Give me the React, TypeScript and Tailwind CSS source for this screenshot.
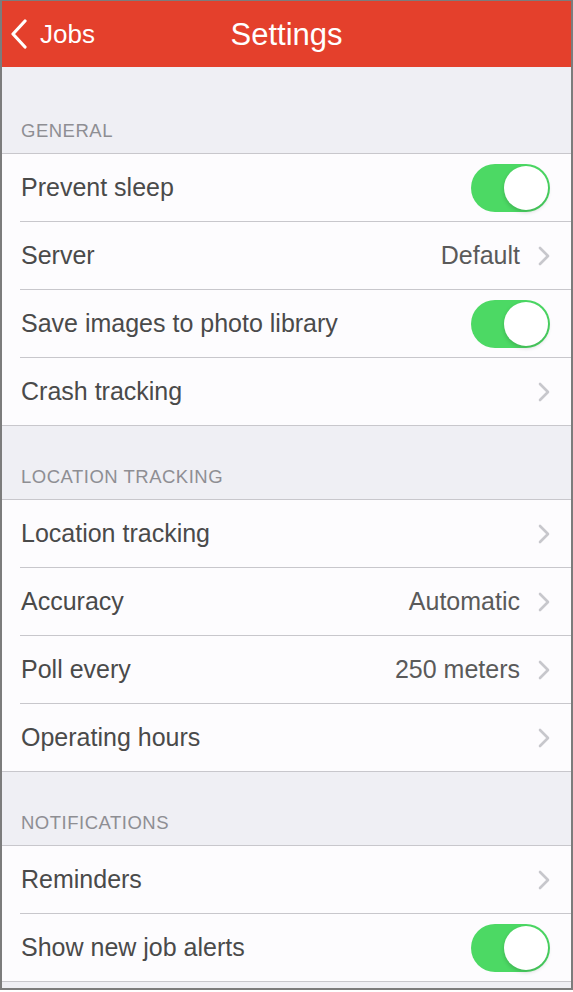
import type { ReactNode } from 'react';

type Row =
  | { label: string; kind: 'toggle' }
  | { label: string; kind: 'link'; value?: string };

const sections: { title: string; rows: Row[] }[] = [
  {
    title: 'GENERAL',
    rows: [
      { label: 'Prevent sleep', kind: 'toggle' },
      { label: 'Server', kind: 'link', value: 'Default' },
      { label: 'Save images to photo library', kind: 'toggle' },
      { label: 'Crash tracking', kind: 'link' },
    ],
  },
  {
    title: 'LOCATION TRACKING',
    rows: [
      { label: 'Location tracking', kind: 'link' },
      { label: 'Accuracy', kind: 'link', value: 'Automatic' },
      { label: 'Poll every', kind: 'link', value: '250 meters' },
      { label: 'Operating hours', kind: 'link' },
    ],
  },
  {
    title: 'NOTIFICATIONS',
    rows: [
      { label: 'Reminders', kind: 'link' },
      { label: 'Show new job alerts', kind: 'toggle' },
    ],
  },
];

/** iOS-style "on" switch. */
function Toggle() {
  return (
    <div className="w-[79px] h-[48px] rounded-full bg-[#4cd964] flex items-center justify-end pr-[2px]">
      <div className="w-[44px] h-[44px] rounded-full bg-white shadow-[0_2px_4px_rgba(0,0,0,0.18)]" />
    </div>
  );
}

function Chevron() {
  return (
    <svg width="12" height="20" viewBox="0 0 12 20" fill="none">
      <path d="M2 2l8 8-8 8" stroke="#c7c7cc" strokeWidth="2.6" strokeLinecap="round" strokeLinejoin="round" />
    </svg>
  );
}

function SectionHeader({ first, children }: { first?: boolean; children: ReactNode }) {
  return (
    <div className={`${first ? 'pt-[53px]' : 'pt-[40px]'} pb-[11px] px-[19px] text-[18.5px] leading-[22px] tracking-[0.5px] text-[#8e8e93]`}>
      {children}
    </div>
  );
}

export default function App() {
  return (
    <div
      className="w-[573px] h-[990px] border-x-2 border-b-2 border-t border-[#7c7c7c] bg-[#efeff4] overflow-hidden"
      style={{ fontFamily: '"Liberation Sans", Arial, sans-serif' }}
    >
      {/* ── Nav bar ─────────────────────────────────────────────── */}
      <div className="relative h-[66px] bg-[#e4402c] flex items-center justify-center text-white">
        <div className="absolute left-[8px] top-0 bottom-0 flex items-center gap-[12px]">
          <svg width="18" height="30" viewBox="0 0 18 30" fill="none">
            <path d="M15 2L3 15l12 13" stroke="white" strokeWidth="3.2" strokeLinecap="round" strokeLinejoin="round" />
          </svg>
          <span className="text-[26px] leading-none">Jobs</span>
        </div>
        <span className="text-[31px] leading-none">Settings</span>
      </div>

      {/* ── Sections ────────────────────────────────────────────── */}
      {sections.map((section, si) => (
        <div key={section.title}>
          <SectionHeader first={si === 0}>{section.title}</SectionHeader>
          <div className="bg-[#fdfcfe] border-y border-[#c8c7cc]">
            {section.rows.map((row, ri) => (
              <div key={row.label}>
                {ri > 0 && <div className="ml-[18px] h-px bg-[#c8c7cc]" />}
                <div className="h-[67px] flex items-center justify-between pl-[19px] pr-[21px]">
                  <span className="text-[25px] text-[#4a4a4a]">{row.label}</span>
                  {row.kind === 'toggle' ? (
                    <Toggle />
                  ) : (
                    <div className="flex items-center gap-[18px]">
                      {row.value && <span className="text-[25px] text-[#5a5a5a]">{row.value}</span>}
                      <Chevron />
                    </div>
                  )}
                </div>
              </div>
            ))}
          </div>
        </div>
      ))}
    </div>
  );
}
